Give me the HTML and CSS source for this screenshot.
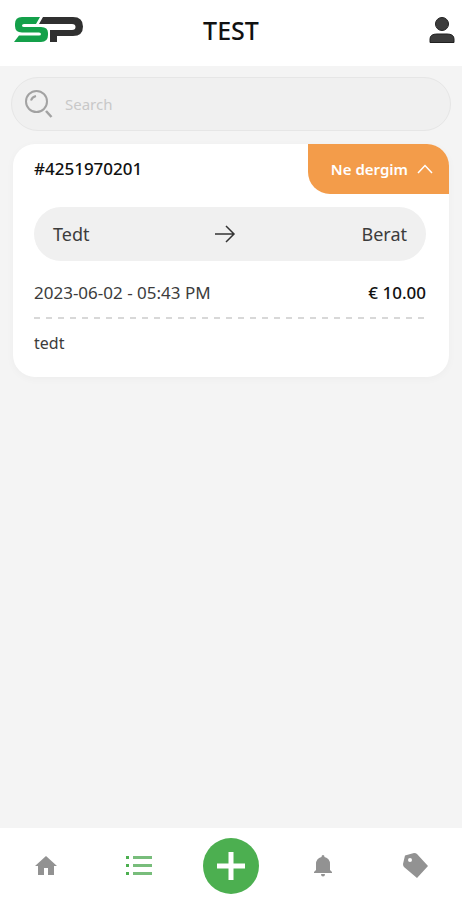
FILE: index.html
```html
<!DOCTYPE html>
<html lang="en">
    <head>
        <meta charset="UTF-8">
        <meta name="viewport" content="width=device-width, initial-scale=1.0">
        <title>TEST</title>
        <link rel="stylesheet" href="styles.css">
    </head>
    <body>
        <header>
            <a href="#" class="logo" aria-label="SP">
                <svg width="70" height="26" viewBox="0 0 70 26">
                    <path fill="#14a04a" d="M8 0H26L22 7H10Q8 7 8 8.500Q8 10 10 10H27Q34 10 34 16V18Q34 25 27 25H0L5 18.500H25Q27 18.500 27 17Q27 15.500 25 15.500H8Q1 15.500 1 9V7Q1 0 8 0Z"/>
                    <path fill="#303030" d="M29 0H59Q69 0 69 9.500Q69 19 59 19H43V25H36V13H58Q61.500 13 61.500 10Q61.500 7 58 7H25Z"/>
                </svg>
            </a>
            <h1>TEST</h1>
            <a href="#" class="profile" aria-label="Profile">
                <svg width="26" height="28" viewBox="0 0 26 28" fill="#3c3c3c" stroke="#202020">
                    <circle cx="13" cy="8" r="6.500"/>
                    <path d="M1 26.500V23Q1 18 8 18H18Q25 18 25 23V26.500Z"/>
                </svg>
            </a>
        </header>

        <main>
            <label class="search">
                <svg width="28" height="28" viewBox="0 0 28 28" fill="none" stroke="#a2a2a2" stroke-width="2">
                    <circle cx="11.500" cy="11.500" r="10.500"/>
                    <path d="M6 10.500Q7 7 11 6"/>
                    <path stroke-width="2.500" d="M21 21L26.500 27"/>
                </svg>
                <input type="search" placeholder="Search" aria-label="Search">
            </label>

            <article class="card">
                <div class="card-top">
                    <h2>#4251970201</h2>
                    <button type="button" class="status">
                        Ne dergim
                        <svg width="16" height="10" viewBox="0 0 16 10" fill="none" stroke="#fff" stroke-width="1.500">
                            <path d="M1 9L8 1.500L15 9"/>
                        </svg>
                    </button>
                </div>
                <div class="card-body">
                    <div class="route">
                        <span>Tedt</span>
                        <svg width="22" height="18" viewBox="0 0 22 18" fill="none" stroke="#333" stroke-width="1.500">
                            <path d="M1 9H20M12 1L20 9L12 17"/>
                        </svg>
                        <span>Berat</span>
                    </div>
                    <div class="details">
                        <time datetime="2023-06-02T17:43">2023-06-02 - 05:43 PM</time>
                        <strong>€ 10.00</strong>
                    </div>
                    <svg class="divider" height="2">
                        <line x1="0" y1="1" x2="100%" y2="1" stroke="#d8d8d8" stroke-width="2" stroke-dasharray="6 6"/>
                    </svg>
                    <p>tedt</p>
                </div>
            </article>
        </main>

        <nav>
            <a href="#" aria-label="Home">
                <svg width="22" height="20" viewBox="0 0 22 20" fill="#929292">
                    <path d="M11 0L22 10H19V19H13V12H9V19H3V10H0Z"/>
                </svg>
            </a>
            <a href="#" aria-label="Orders">
                <svg width="26" height="22" viewBox="0 0 26 22" fill="#4caf50">
                    <path d="M0 1H3V4H0ZM0 9H3V12H0ZM0 17H3V20H0Z"/>
                    <path fill="#78bd7b" d="M7 1H26V4H7ZM7 9H26V12H7ZM7 17H26V20H7Z"/>
                </svg>
            </a>
            <button type="button" class="add" aria-label="Add">
                <svg width="30" height="30" viewBox="0 0 30 30" fill="none" stroke="#fff" stroke-width="5">
                    <path d="M15 1V29M1 15H29"/>
                </svg>
            </button>
            <a href="#" aria-label="Notifications">
                <svg width="18" height="22" viewBox="0 0 18 22" fill="#929292">
                    <path d="M7.500 2Q7.500 0 9 0Q10.500 0 10.500 2Q16 3.500 16 9V15L18 17V18H0V17L2 15V9Q2 3.500 7.500 2ZM7 19H11Q11 21.500 9 21.500Q7 21.500 7 19Z"/>
                </svg>
            </a>
            <a href="#" aria-label="Offers">
                <svg width="25" height="25" viewBox="0 0 25 25" fill="#929292">
                    <path fill-rule="evenodd" d="M2 2.500L11 0Q13 0 14 1L25 13L14 25L1 14Q0 13 0 11ZM7 5A2 2 0 1 0 7 9A2 2 0 1 0 7 5Z"/>
                </svg>
            </a>
        </nav>
    </body>
</html>
```
FILE: styles.css
```css
* {
    box-sizing: border-box;
}

body {
    font-family: 'Noto Sans', sans-serif;
    font-size: 16px;
    line-height: 24px;
    min-height: 100vh;
    margin: 0;
    display: flex;
    flex-direction: column;
    background-color: #f4f4f4;
    color: #3c3c3c;
}

h1, h2, p {
    margin: 0;
}

svg {
    display: block;
    flex-shrink: 0;
}

button {
    font: inherit;
    border: none;
    cursor: pointer;
}

header {
    display: grid;
    grid-template-columns: 1fr auto 1fr;
    align-items: center;
    height: 66px;
    padding-bottom: 6px;
    background-color: #fff;
}

h1 {
    font-size: 25px;
    font-weight: 500;
    color: #111;
}

.logo {
    padding-left: 14px;
}

.profile {
    justify-self: end;
    padding-right: 7px;
}

main {
    flex: 1;
    padding: 11px;
}

.search {
    display: flex;
    align-items: center;
    gap: 12px;
    height: 54px;
    padding: 0 13px;
    background-color: #f0f0f0;
    border: 1px solid #e6e6e6;
    border-radius: 27px;
}

.search input {
    flex: 1;
    min-width: 0;
    padding: 0;
    border: none;
    outline: none;
    background: none;
    font: inherit;
    font-size: 15px;
}

.search input::placeholder {
    color: #c8c8c8;
}

.card {
    margin: 13px 2px 0;
    background-color: #fff;
    border-radius: 22px;
    box-shadow: 0 2px 8px rgba(0, 0, 0, 0.03);
}

.card-top {
    display: flex;
    justify-content: space-between;
    align-items: center;
    padding-left: 21px;
}

h2 {
    font-size: 17px;
    font-weight: 500;
    color: #111;
}

.status {
    display: flex;
    align-items: center;
    gap: 9px;
    height: 50px;
    padding: 0 16px 0 23px;
    background-color: #f39c4a;
    border-radius: 0 22px 0 22px;
    color: #fff;
    font-size: 15px;
    font-weight: 600;
}

.card-body {
    padding: 13px 23px 22px 21px;
}

.route {
    display: flex;
    justify-content: space-between;
    align-items: center;
    height: 54px;
    padding: 0 19px;
    background-color: #f0f0f0;
    border-radius: 27px;
    font-size: 18px;
}

.details {
    display: flex;
    justify-content: space-between;
    padding: 20px 0 12px;
    font-size: 17px;
}

.details strong {
    font-weight: 500;
    color: #111;
}

.divider {
    width: 100%;
    margin-bottom: 12px;
}

nav {
    display: grid;
    grid-template-columns: repeat(5, 1fr);
    align-items: center;
    justify-items: center;
    height: 72px;
    padding-top: 3px;
    background-color: #fff;
}

.add {
    display: flex;
    justify-content: center;
    align-items: center;
    width: 56px;
    height: 56px;
    padding: 0;
    border-radius: 50%;
    background-color: #4caf50;
}
```
